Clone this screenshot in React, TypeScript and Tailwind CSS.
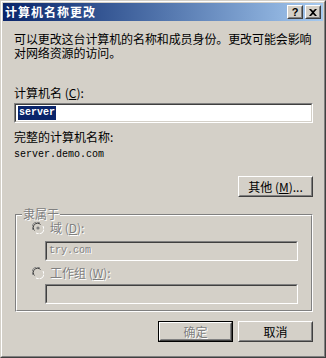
const ui = '"Noto Sans CJK SC", "Liberation Sans", sans-serif'
const mono = '"Liberation Mono", "DejaVu Sans Mono", monospace'

function Raised({ children, className = '' }: { children: React.ReactNode; className?: string }) {
  return (
    <div className={`border border-t-white border-l-white border-b-[#404040] border-r-[#404040] ${className}`}>
      <div className="w-full h-full border border-t-[#D4D0C8] border-l-[#D4D0C8] border-b-[#808080] border-r-[#808080] flex items-center justify-center">
        {children}
      </div>
    </div>
  )
}

function Sunken({ children, className = '', disabled = false }: { children?: React.ReactNode; className?: string; disabled?: boolean }) {
  return (
    <div className={`border border-t-[#808080] border-l-[#808080] border-b-white border-r-white ${className}`}>
      <div className={`w-full h-full border border-t-[#404040] border-l-[#404040] border-b-[#D4D0C8] border-r-[#D4D0C8] flex items-center px-[2px] ${disabled ? 'bg-[#D4D0C8]' : 'bg-white'}`}>
        {children}
      </div>
    </div>
  )
}

function Radio({ checked }: { checked?: boolean }) {
  return (
    <svg width="12" height="12" viewBox="0 0 12 12" className="shrink-0">
      <path d="M1 8 A5 5 0 0 1 8 1" stroke="#808080" fill="none" />
      <path d="M2.5 8.5 A4 4 0 0 1 8.5 2.5" stroke="#404040" fill="none" />
      <path d="M4 11 A5 5 0 0 0 11 4" stroke="#fff" fill="none" />
      <circle cx="6" cy="6" r="3.6" fill="#D4D0C8" />
      {checked && <circle cx="6" cy="6" r="1.6" fill="#808080" />}
    </svg>
  )
}

export default function App() {
  return (
    <div className="w-[326px] h-[358px] bg-[#D4D0C8] text-[12px] text-black" style={{ fontFamily: ui }}>
      <div className="w-full h-full border border-t-[#D4D0C8] border-l-[#D4D0C8] border-b-[#404040] border-r-[#404040]">
        <div className="w-full h-full border border-t-white border-l-white border-b-[#808080] border-r-[#808080] p-px flex flex-col">
          {/* title bar */}
          <div className="h-[18px] flex items-center justify-between pl-[2px] pr-[2px] bg-gradient-to-r from-[#0A246A] to-[#A6CAF0]">
            <span className="text-white font-bold text-[12px] leading-none tracking-[1px]">计算机名称更改</span>
            <div className="flex gap-[2px]">
              <Raised className="w-[16px] h-[14px] bg-[#D4D0C8]">
                <span className="text-[11px] font-bold leading-none" style={{ fontFamily: '"Liberation Sans", sans-serif' }}>?</span>
              </Raised>
              <Raised className="w-[16px] h-[14px] bg-[#D4D0C8]">
                <svg width="8" height="7" viewBox="0 0 8 7">
                  <path d="M0 0h2l2 2 2-2h2L5 3.5 8 7H6L4 5 2 7H0l3-3.5z" fill="#000" />
                </svg>
              </Raised>
            </div>
          </div>

          <div className="pl-[11px] pr-[9px] flex flex-col">
            <p className="mt-[11px] leading-[14px] tracking-[-0.1px]">
              可以更改这台计算机的名称和成员身份。更改可能会影响对网络资源的访问。
            </p>

            <div className="mt-[26px] leading-[14px]">
              计算机名 (<span className="underline">C</span>):
            </div>
            <Sunken className="mt-[3px] w-[299px] h-[20px]">
              <span className="bg-[#0A246A] text-white text-[10px] leading-[14px] font-bold px-px" style={{ fontFamily: mono }}>server</span>
            </Sunken>

            <div className="mt-[7px] leading-[14px]">完整的计算机名称:</div>
            <div className="mt-[5px] text-[10px] leading-[12px]" style={{ fontFamily: mono }}>server.demo.com</div>

            <div className="mt-[15px] flex justify-end pr-px">
              <Raised className="w-[75px] h-[21px] bg-[#D4D0C8]">
                <span className="leading-none">其他 (<span className="underline">M</span>)...</span>
              </Raised>
            </div>

            {/* group box */}
            <div className="relative mt-[17px] ml-px w-[298px] h-[98px] border border-t-[#808080] border-l-[#808080] border-b-white border-r-white">
              <div className="w-full h-full border border-t-white border-l-white border-b-[#808080] border-r-[#808080] pt-[5px] pl-[14px] pr-[13px] flex flex-col text-[#808080]">
                <div className="flex items-center gap-[6px] h-[14px] ml-[1px]">
                  <Radio checked />
                  <span className="leading-[14px] [text-shadow:1px_1px_0_#fff]">域 (<span className="underline">D</span>):</span>
                </div>
                <Sunken disabled className="mt-[6px] ml-[14px] w-[253px] h-[20px]">
                  <span className="text-[10px] leading-[12px] [text-shadow:1px_1px_0_#fff]" style={{ fontFamily: mono }}>try.com</span>
                </Sunken>
                <div className="mt-[5px] flex items-center gap-[6px] h-[14px] ml-[1px]">
                  <Radio />
                  <span className="leading-[14px] [text-shadow:1px_1px_0_#fff]">工作组 (<span className="underline">W</span>):</span>
                </div>
                <Sunken disabled className="mt-[4px] ml-[14px] w-[253px] h-[20px]" />
              </div>
              <span className="absolute -top-[7px] left-[6px] px-px bg-[#D4D0C8] leading-[12px] text-[#808080] [text-shadow:1px_1px_0_#fff]">隶属于</span>
            </div>

            <div className="mt-[9px] flex justify-end gap-[5px] pr-px">
              <div className="border border-black">
                <Raised className="w-[73px] h-[19px] bg-[#D4D0C8]">
                  <span className="leading-none text-[#808080] [text-shadow:1px_1px_0_#fff]">确定</span>
                </Raised>
              </div>
              <Raised className="w-[75px] h-[21px] bg-[#D4D0C8]">
                <span className="leading-none">取消</span>
              </Raised>
            </div>
          </div>
        </div>
      </div>
    </div>
  )
}
